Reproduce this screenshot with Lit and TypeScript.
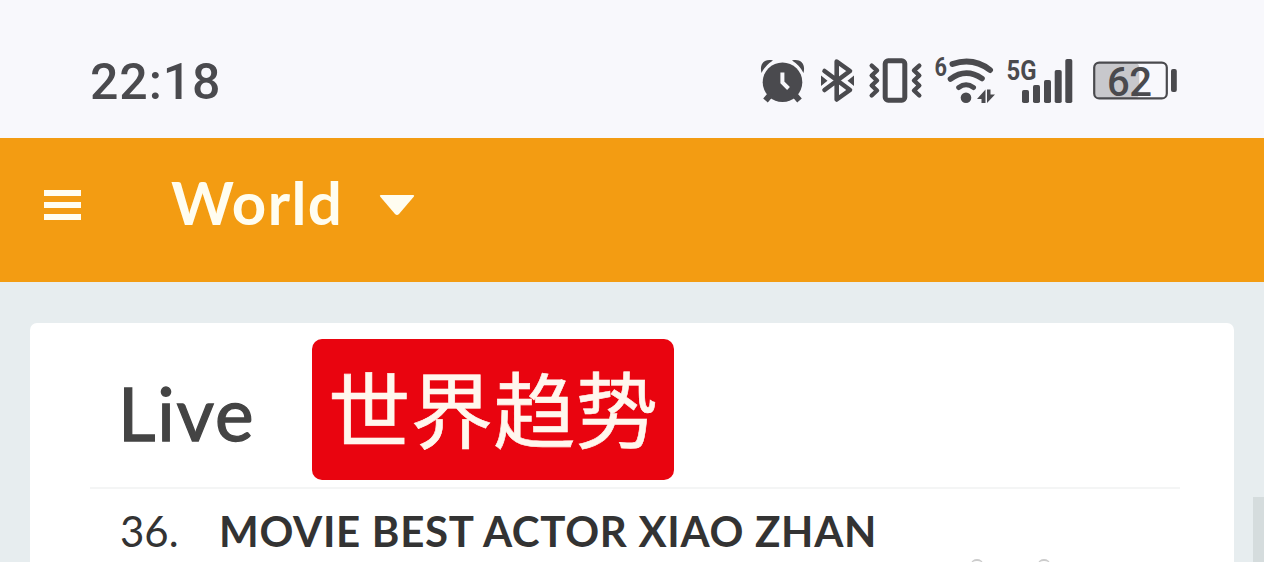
import { css, html, LitElement, svg } from "lit";
import { customElement, property } from "lit/decorators.js";

interface Trend {
	rank: number;
	name: string;
}

const BARS = [
	[1022, 90],
	[1033, 85],
	[1044, 80],
	[1054.7, 70],
	[1065.3, 59],
];

@customElement("status-bar")
export class StatusBar extends LitElement {
	@property()
	time = "22:18";

	@property({ type: Number })
	battery = 62;

	static override styles = css`
		:host {
			display: flex;
			justify-content: space-between;
			box-sizing: border-box;
			block-size: 138px;
			padding: 55px 87px 0 90px;
			background: #f8f8fc;
			color: #4a4a4e;
		}

		.time {
			font: 500 50px/54px Roboto, sans-serif;
			letter-spacing: 0.9px;
		}

		.icons {
			display: flex;
			block-size: 52px;
		}

		svg {
			display: block;
			block-size: 52px;
			fill: currentColor;
			overflow: visible;
		}

		.line {
			fill: none;
			stroke: currentColor;
			stroke-linecap: round;
			stroke-linejoin: round;
		}

		.label {
			font-family: Roboto, sans-serif;
			font-weight: 700;
		}

		.level {
			font-family: Roboto, sans-serif;
			font-weight: 500;
			font-size: 40px;
		}
	`;

	override render() {
		return html`
			<div class="time">${this.time}</div>
			<div class="icons">
				<svg width="58" viewBox="761 55 58 52">
					<circle cx="782.5" cy="82.2" r="19.8" />
					<path d="M761.500 73C759 63 765 58.500 773 60.500Q765.500 65 761.500 73ZM803.500 73C806 63 800 58.500 792 60.500Q799.500 65 803.500 73Z" />
					<path d="M771 94L765.500 100.500M794 94L799.500 100.500" stroke="currentColor" stroke-width="6" />
					<path d="M782.400 72.500V82.500L788.500 88.500" fill="none" stroke="#f8f8fc" stroke-width="4" />
				</svg>
				<svg width="49" viewBox="819 55 49 52">
					<path class="line" stroke-width="4.6" d="M824.500 71L850 90L836.700 99.500V61.500L850 71L824.500 90" />
					<path d="M821 75.500V86L827.500 80.700ZM854 75.500V86L847.500 80.700Z" />
				</svg>
				<svg width="66" viewBox="868 55 66 52">
					<rect class="line" stroke-width="5" x="885.2" y="60.8" width="19.600" height="39.400" rx="3" />
					<path class="line" stroke-width="4.4" d="M871.700 65.700L877 70.500L871.700 75.500L877 80.500L871.700 85.500L877 90.500L871.700 95.500M919.300 65.700L914 70.500L919.300 75.500L914 80.500L919.300 85.500L914 90.500L919.300 95.500" />
				</svg>
				<svg width="71" viewBox="934 55 71 52">
					<text class="label" x="934.5" y="75.800" font-size="25.500" textLength="12.500" lengthAdjust="spacingAndGlyphs">6</text>
					<circle cx="966" cy="97.700" r="5.300" />
					<path class="line" stroke-width="5" d="M958.700 87.500Q966 82 973.500 87.500" />
					<path class="line" stroke-width="5.600" d="M950.500 79Q966 67.500 982 78.500" />
					<path class="line" stroke-width="6" d="M952.500 64C966 59.500 979 61.500 990 70" />
					<path d="M985.500 89.500V103H981.500V99H977ZM987 89.500H990.500V94.500H995L987 103Z" />
				</svg>
				<svg width="87" viewBox="1005 55 87 52">
					<text class="label" x="1006.500" y="80" font-size="28.500" textLength="30" lengthAdjust="spacingAndGlyphs">5G</text>
					${BARS.map(([x, y]) => svg`<rect x=${x} y=${y} width="7" height=${103 - y} rx="1.8" />`)}
				</svg>
				<svg width="85" viewBox="1092 55 85 52">
					<rect x="1094" y="62.500" width=${(this.battery / 100) * 73} height="36" rx="5" fill="#c8c8cc" />
					<rect class="line" stroke-width="2.2" x="1094.200" y="62.600" width="72.600" height="35.800" rx="5" />
					<rect x="1171" y="69" width="5.800" height="23" rx="2" />
					<text class="level" x="1107" y="95.500" textLength="45">${this.battery}</text>
				</svg>
			</div>
		`;
	}
}

@customElement("nav-bar")
export class NavBar extends LitElement {
	@property()
	region = "";

	static override styles = css`
		:host {
			display: flex;
			align-items: center;
			box-sizing: border-box;
			block-size: 144px;
			padding: 0 44px 10px;
			background: #f39c12;
			color: #fffdf0;
		}

		.menu {
			display: grid;
			gap: 6px;
			inline-size: 37px;
			margin-inline-end: 90px;
		}

		.menu span {
			block-size: 6px;
			background: currentColor;
		}

		.region {
			inline-size: 170px;
			padding-block-end: 6px;
			font: 700 60px/72px Lato, sans-serif;
			letter-spacing: 1.4px;
			white-space: nowrap;
		}

		.caret {
			margin-inline-start: 38px;
			fill: currentColor;
		}
	`;

	override render() {
		return html`
			<div class="menu"><span></span><span></span><span></span></div>
			<div class="region">${this.region}</div>
			<svg class="caret" width="36" height="22" viewBox="0 0 36 22">
				<path d="M2 1H34Q36 1 34.500 3L20 20Q18 22 16 20L1.500 3Q0 1 2 1Z" />
			</svg>
		`;
	}
}

@customElement("app-root")
export class AppRoot extends LitElement {
	@property({ attribute: false })
	trends: Trend[] = [{ rank: 36, name: "MOVIE BEST ACTOR XIAO ZHAN" }];

	static override styles = css`
		:host {
			display: flex;
			flex-direction: column;
			position: relative;
			block-size: 562px;
			overflow: hidden;
			background: #e7edef;
		}

		.card {
			flex: 1;
			box-sizing: border-box;
			margin: 41px 30px 0;
			padding: 16px 54px 0 60px;
			border-radius: 7px 7px 0 0;
			background: #fff;
		}

		.head {
			display: flex;
			align-items: center;
			block-size: 148px;
			border-block-end: 2px solid #f4f5f5;
		}

		.title {
			inline-size: 194px;
			padding: 0 0 1px 28px;
			box-sizing: content-box;
			color: #444;
			font: 400 73px/88px Lato, sans-serif;
			letter-spacing: 1.8px;
			-webkit-text-stroke: 1.3px #444;
		}

		.badge {
			box-sizing: border-box;
			inline-size: 362px;
			block-size: 141px;
			margin-block-end: 7px;
			border-radius: 10px;
			background: #e9040f;
			color: #fff7ee;
			font: 400 82.500px/135px "Noto Sans CJK SC", sans-serif;
			-webkit-text-stroke: 0.6px #fff7ee;
			text-align: center;
			white-space: nowrap;
		}

		.trend {
			display: flex;
			padding: 16px 0 0 30px;
			color: #333;
			font: 400 42px/52px Lato, sans-serif;
			white-space: nowrap;
		}

		.rank {
			inline-size: 99px;
		}

		.name {
			font-weight: 700;
			letter-spacing: 0.7px;
		}

		.thumb {
			position: absolute;
			inset: 497px 0 0 auto;
			inline-size: 11px;
			background: #d5dcdd;
		}

		.watermark {
			position: absolute;
			inset: 559px auto auto 971px;
			display: flex;
			gap: 55px;
		}

		.watermark span {
			inline-size: 12px;
			block-size: 8px;
			border-block-start: 2px solid #ccc;
			border-radius: 50%;
		}
	`;

	override render() {
		return html`
			<status-bar></status-bar>
			<nav-bar region="World"></nav-bar>
			<div class="card">
				<div class="head">
					<div class="title">Live</div>
					<div class="badge">世界趋势</div>
				</div>
				${this.trends.map(
					(trend) => html`
						<div class="trend">
							<span class="rank">${trend.rank}.</span>
							<span class="name">${trend.name}</span>
						</div>
					`,
				)}
			</div>
			<div class="thumb"></div>
			<div class="watermark"><span></span><span></span></div>
		`;
	}
}

declare global {
	interface HTMLElementTagNameMap {
		"status-bar": StatusBar;
		"nav-bar": NavBar;
		"app-root": AppRoot;
	}
}
